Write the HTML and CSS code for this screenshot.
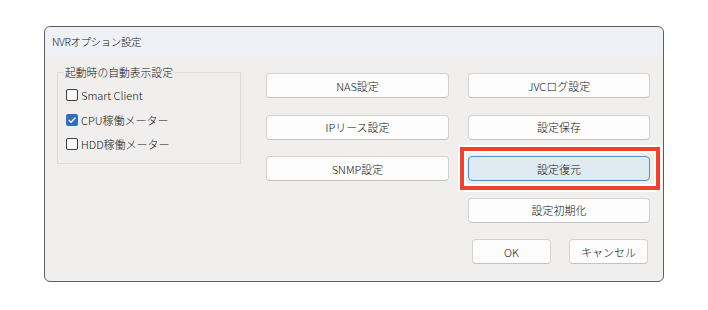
FILE: index.html
```html
<!DOCTYPE html>
<html lang="ja">
<head>
<meta charset="utf-8">
<title>NVRオプション設定</title>
<link rel="stylesheet" href="styles.css">
</head>
<body>
<div class="dialog">
  <div class="titlebar">NVRオプション設定</div>
  <div class="content">
    <fieldset class="group">
      <legend>起動時の自動表示設定</legend>
      <label class="check"><span class="box"></span>Smart Client</label>
      <label class="check"><span class="box checked"><svg viewBox="0 0 12 12" width="12" height="12"><path d="M3 6.2 L5.1 8.2 L9 4" fill="none" stroke="#fff" stroke-width="1.3" stroke-linecap="round" stroke-linejoin="round"/></svg></span>CPU稼働メーター</label>
      <label class="check"><span class="box"></span>HDD稼働メーター</label>
    </fieldset>
    <div class="col col1">
      <button class="btn">NAS設定</button>
      <button class="btn">IPリース設定</button>
      <button class="btn">SNMP設定</button>
    </div>
    <div class="col col2">
      <button class="btn">JVCログ設定</button>
      <button class="btn">設定保存</button>
      <button class="btn focus">設定復元</button>
      <button class="btn">設定初期化</button>
      <div class="actions">
        <button class="btn small">OK</button>
        <button class="btn small">キャンセル</button>
      </div>
    </div>
  </div>
</div>
</body>
</html>
```

FILE: styles.css
```css
html, body {
  margin: 0;
  padding: 0;
  background: #ffffff;
}
body {
  padding: 26px 0 0 44px;
  font-family: "Noto Sans CJK JP", "Noto Sans", sans-serif;
  font-size: 11px;
  font-weight: 300;
  color: #111111;
}
.dialog {
  width: 618px;
  height: 254px;
  border: 1px solid #5e5e5e;
  border-radius: 6px;
  background: #f0efed;
  display: flex;
  flex-direction: column;
}
.titlebar {
  height: 29px;
  line-height: 29px;
  padding-left: 7px;
  background: #eff1f6;
  border-radius: 6px 6px 0 0;
  font-size: 10.5px;
  letter-spacing: -0.4px;
}
.content {
  flex: 1;
  display: flex;
  align-items: flex-start;
  padding: 17px 0 0 12px;
}
.group {
  width: 184px;
  height: 100px;
  margin: -9px 0 0 0;
  padding: 3px 0 4px 8px;
  border: 1px solid #dcdbd9;
  box-sizing: border-box;
}
.group legend {
  padding: 0 2px;
  margin-left: -3px;
  line-height: 16px;
  font-size: 10.8px;
}
.check {
  display: flex;
  align-items: center;
  gap: 3px;
  height: 24.5px;
  font-size: 11px;
}
.box {
  width: 10px;
  height: 10px;
  border: 1px solid #3c3c3c;
  border-radius: 2px;
  background: #fbfbfb;
  display: inline-flex;
  align-items: center;
  justify-content: center;
}
.box.checked {
  width: 12px;
  height: 12px;
  border: none;
  background: #2f6fc0;
}
.box svg {
  display: block;
}
.col {
  display: flex;
  flex-direction: column;
  gap: 16.5px;
}
.col1 {
  width: 183px;
  margin-left: 25px;
}
.col2 {
  width: 182px;
  margin-left: 19px;
}
.btn {
  height: 25px;
  margin: 0;
  padding: 0;
  border: 1px solid #d3d2d0;
  border-bottom-color: #c4c3c1;
  border-radius: 4px;
  background: #fdfdfd;
  font-family: inherit;
  font-weight: 300;
  font-size: 11px;
  color: #111111;
}
.btn.focus {
  position: relative;
  background: #dfeaf1;
  border: 1px solid #4f90c9;
}
.btn.focus::before {
  content: "";
  position: absolute;
  left: -9px;
  top: -10px;
  right: -11px;
  bottom: -10px;
  border: 4px solid #f2412e;
  box-shadow: inset 0 0 0 2px #ffffff, 0 0 0 2px #ffffff;
  pointer-events: none;
}
.actions {
  display: flex;
  gap: 18px;
  padding-left: 4px;
}
.btn.small {
  width: 79px;
}
```
